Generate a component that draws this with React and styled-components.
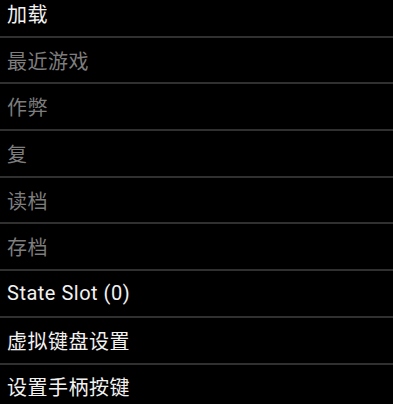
import React from 'react';
import styled, { createGlobalStyle } from 'styled-components';

const items = [
  { label: '加载', enabled: true },
  { label: '最近游戏', enabled: false },
  { label: '作弊', enabled: false },
  { label: '复', enabled: false },
  { label: '读档', enabled: false },
  { label: '存档', enabled: false },
  { label: 'State Slot (0)', enabled: true },
  { label: '虚拟键盘设置', enabled: true },
  { label: '设置手柄按键', enabled: true },
];

const Global = createGlobalStyle`
  html, body {
    margin: 0;
    padding: 0;
    background: #000;
    overflow: hidden;
  }
`;

const Screen = styled.div`
  width: 393px;
  height: 404px;
  background: #000;
  overflow: hidden;
`;

const List = styled.ul`
  list-style: none;
  margin: -9px 0 0 0;
  padding: 0;
`;

const Row = styled.li`
  height: 44.7px;
  display: flex;
  align-items: center;
  padding: 0 7px;
  border-bottom: 2px solid #303030;
  font-family: Roboto, "Noto Sans CJK SC", sans-serif;
  font-size: 20px;
  letter-spacing: 0.5px;
  color: ${({ enabled }) => (enabled ? '#f2f2f2' : '#7d7d7d')};
`;

const App = () => {
  return (
    <Screen>
      <Global />
      <List>
        {items.map((item) => (
          <Row key={item.label} enabled={item.enabled}>
            {item.label}
          </Row>
        ))}
      </List>
    </Screen>
  );
};

export default App;
